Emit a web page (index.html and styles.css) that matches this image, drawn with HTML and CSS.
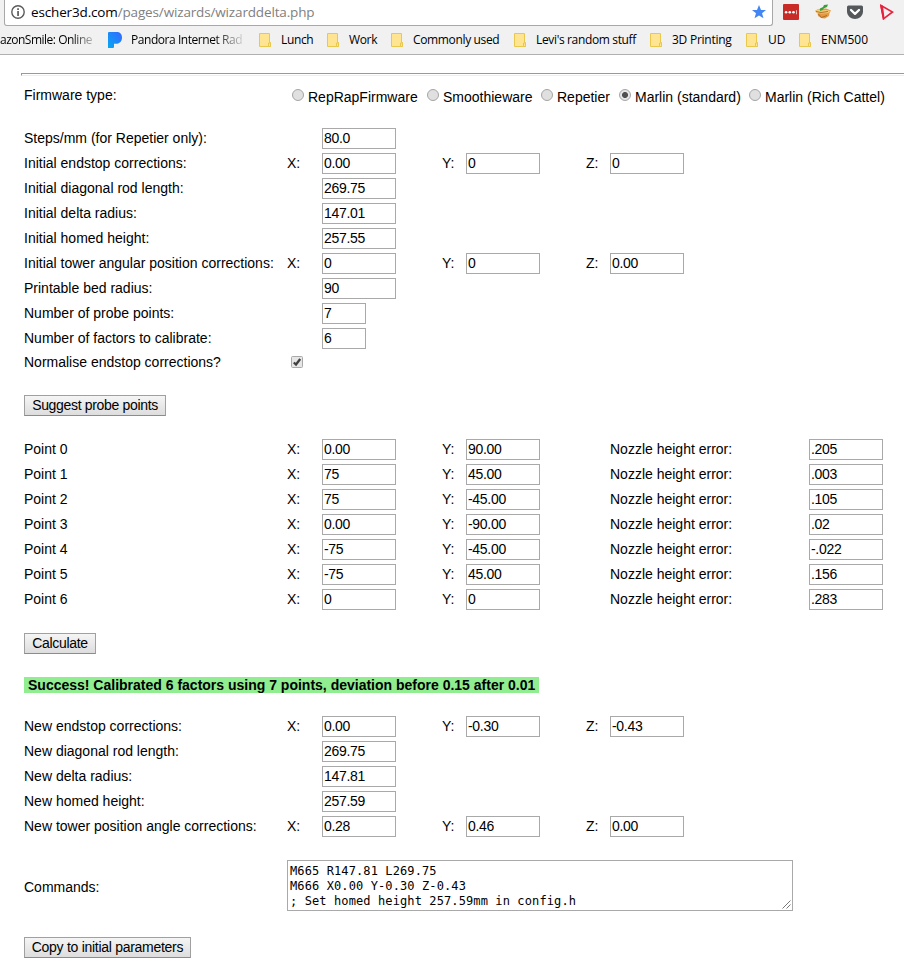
FILE: index.html
```html
<!DOCTYPE html>
<html lang="en">
<head>
<meta charset="utf-8">
<title>Delta calibration wizard</title>
<link rel="stylesheet" href="styles.css">
</head>
<body>
<header class="chrome">
  <div class="toolbar">
    <div class="omnibox">
      <svg class="info" width="14" height="14" viewBox="0 0 14 14"><circle cx="7" cy="7" r="6.2" fill="none" stroke="#5a5a5a" stroke-width="1.4"/><path d="M6.2 3.2h1.700v1.700H6.2zM6.2 6h1.700v5H6.2z" fill="#5a5a5a"/></svg>
      <span class="url">escher3d.com<span class="path">/pages/wizards/wizarddelta.php</span></span>
      <svg class="star" width="16" height="16" viewBox="0 0 16 16"><path d="M8 1l2 5h5l-4 3.300 1.500 5L8 11.500l-4.500 2.800L5 9.300 1 6h5z" fill="#4285f4"/></svg>
    </div>
    <div class="extensions">
      <svg width="16" height="16" viewBox="0 0 16 16"><rect width="16" height="16" rx="1" fill="#c92b27"/><circle cx="3.100" cy="8.200" r="1.300" fill="#fff"/><circle cx="6.800" cy="8.200" r="1.300" fill="#fff"/><circle cx="10.500" cy="8.200" r="1.300" fill="#fff"/><path d="M13 6.200h1v4h-1z" fill="#f3b5b3"/></svg>
      <svg width="16" height="16" viewBox="0 0 16 16"><path d="M0 7l3-2 8-.5 5 2-1.500 2.500-.5 3-4 2.500-4-.5-3-2-.5-3z" fill="#e39a42"/><path d="M0 7.500L3 5l3 1.500 5-.5 4.500 1L13 9l-6 .5L2 9z" fill="#f9cc78"/><path d="M1 7.500l5 1 7-1M3.500 10l3 3.500 5.500-2" fill="none" stroke="#a76520" stroke-width=".9"/><path d="M5 7V4.500L8 3l1-2 4-.5-1 2.500-3 1.200L7.500 6z" fill="#35a23a"/></svg>
      <svg width="16" height="16" viewBox="0 0 16 16"><path d="M1.500 1.500h13Q16 1.500 16 3v4.500C16 12 12 15 8 15S0 12 0 7.500V3q0-1.500 1.500-1.500z" fill="#55585a"/><path d="M4 6l4 3.800L12 6" fill="none" stroke="#fff" stroke-width="2.300" stroke-linecap="round" stroke-linejoin="round"/></svg>
      <svg width="16" height="16" viewBox="0 0 16 16"><path d="M2 1.500L13.500 8 4.500 14.800z" fill="none" stroke="#e8203c" stroke-width="1.600"/><path d="M1 1l3 .8L5.500 14 4 16z" fill="#e8203c"/></svg>
    </div>
  </div>
  <nav class="bookmarks">
    <span class="bm amazon fade">azonSmile: Online</span>
    <svg class="pandora" width="15" height="16" viewBox="0 0 15 16"><defs><linearGradient id="pg" x1="0" y1="1" x2="1" y2="0"><stop offset="0" stop-color="#05a8f3"/><stop offset="1" stop-color="#3668ff"/></linearGradient></defs><path d="M1 0h7.500C12 0 14 2 14 5.500c0 4-2.500 6.300-6.300 6.300H6V15q0 1-1 1H0V1q0-1 1-1z" fill="url(#pg)"/></svg>
    <span class="bm radio-site fade">Pandora Internet Rad</span>
    <svg class="folder" viewBox="0 0 13 15"><path d="M.5.500h10v9h1v4H.500z" fill="#ffe591" stroke="#e8c84d"/><path d="M9.500 13.500v-3.500h2v3.500z" fill="#ffe591" stroke="#e8c84d"/></svg>
    <span class="bm lunch">Lunch</span>
    <svg class="folder" viewBox="0 0 13 15"><path d="M.5.500h10v9h1v4H.500z" fill="#ffe591" stroke="#e8c84d"/><path d="M9.500 13.500v-3.500h2v3.500z" fill="#ffe591" stroke="#e8c84d"/></svg>
    <span class="bm work">Work</span>
    <svg class="folder" viewBox="0 0 13 15"><path d="M.5.500h10v9h1v4H.500z" fill="#ffe591" stroke="#e8c84d"/><path d="M9.500 13.500v-3.500h2v3.500z" fill="#ffe591" stroke="#e8c84d"/></svg>
    <span class="bm common">Commonly used</span>
    <svg class="folder" viewBox="0 0 13 15"><path d="M.5.500h10v9h1v4H.500z" fill="#ffe591" stroke="#e8c84d"/><path d="M9.500 13.500v-3.500h2v3.500z" fill="#ffe591" stroke="#e8c84d"/></svg>
    <span class="bm levi">Levi's random stuff</span>
    <svg class="folder" viewBox="0 0 13 15"><path d="M.5.500h10v9h1v4H.500z" fill="#ffe591" stroke="#e8c84d"/><path d="M9.500 13.500v-3.500h2v3.500z" fill="#ffe591" stroke="#e8c84d"/></svg>
    <span class="bm printing">3D Printing</span>
    <svg class="folder" viewBox="0 0 13 15"><path d="M.5.500h10v9h1v4H.500z" fill="#ffe591" stroke="#e8c84d"/><path d="M9.500 13.500v-3.500h2v3.500z" fill="#ffe591" stroke="#e8c84d"/></svg>
    <span class="bm ud">UD</span>
    <svg class="folder" viewBox="0 0 13 15"><path d="M.5.500h10v9h1v4H.500z" fill="#ffe591" stroke="#e8c84d"/><path d="M9.500 13.500v-3.500h2v3.500z" fill="#ffe591" stroke="#e8c84d"/></svg>
    <span class="bm enm">ENM500</span>
  </nav>
</header>
<main>
  <div class="rule"></div>
  <div class="firmware">
    <span class="caption">Firmware type:</span>
    <label class="f1"><input type="radio" name="fw"><span>RepRapFirmware</span></label>
    <label class="f2"><input type="radio" name="fw"><span>Smoothieware</span></label>
    <label class="f3"><input type="radio" name="fw"><span>Repetier</span></label>
    <label class="f4"><input type="radio" name="fw" checked><span>Marlin (standard)</span></label>
    <label class="f5"><input type="radio" name="fw"><span>Marlin (Rich Cattel)</span></label>
  </div>
  <section class="initial">
    <div class="row"><span>Steps/mm (for Repetier only):</span><span></span><input value="80.0"></div>
    <div class="row"><span>Initial endstop corrections:</span><span>X:</span><input value="0.00"><span>Y:</span><input value="0"><span>Z:</span><input value="0"></div>
    <div class="row"><span>Initial diagonal rod length:</span><span></span><input value="269.75"></div>
    <div class="row"><span>Initial delta radius:</span><span></span><input value="147.01"></div>
    <div class="row"><span>Initial homed height:</span><span></span><input value="257.55"></div>
    <div class="row"><span>Initial tower angular position corrections:</span><span>X:</span><input value="0"><span>Y:</span><input value="0"><span>Z:</span><input value="0.00"></div>
    <div class="row"><span>Printable bed radius:</span><span></span><input value="90"></div>
    <div class="row"><span>Number of probe points:</span><span></span><input class="short" value="7"></div>
    <div class="row"><span>Number of factors to calibrate:</span><span></span><input class="short" value="6"></div>
    <div class="row check"><span>Normalise endstop corrections?</span><span class="box"><svg width="12" height="12" viewBox="0 0 12 12"><rect x=".5" y=".5" width="11" height="11" rx="1" fill="#e6e6e6" stroke="#a9a9a9"/><path d="M2.800 6.500l2.200 2L9.200 3" fill="none" stroke="#404040" stroke-width="2.300"/></svg></span></div>
  </section>
  <button class="suggest">Suggest probe points</button>
  <section class="points">
    <div class="row"><span>Point 0</span><span>X:</span><input value="0.00"><span>Y:</span><input value="90.00"><span></span><span>Nozzle height error:</span><input value=".205"></div>
    <div class="row"><span>Point 1</span><span>X:</span><input value="75"><span>Y:</span><input value="45.00"><span></span><span>Nozzle height error:</span><input value=".003"></div>
    <div class="row"><span>Point 2</span><span>X:</span><input value="75"><span>Y:</span><input value="-45.00"><span></span><span>Nozzle height error:</span><input value=".105"></div>
    <div class="row"><span>Point 3</span><span>X:</span><input value="0.00"><span>Y:</span><input value="-90.00"><span></span><span>Nozzle height error:</span><input value=".02"></div>
    <div class="row"><span>Point 4</span><span>X:</span><input value="-75"><span>Y:</span><input value="-45.00"><span></span><span>Nozzle height error:</span><input value="-.022"></div>
    <div class="row"><span>Point 5</span><span>X:</span><input value="-75"><span>Y:</span><input value="45.00"><span></span><span>Nozzle height error:</span><input value=".156"></div>
    <div class="row"><span>Point 6</span><span>X:</span><input value="0"><span>Y:</span><input value="0"><span></span><span>Nozzle height error:</span><input value=".283"></div>
  </section>
  <button class="calculate">Calculate</button>
  <p class="success">Success! Calibrated 6 factors using 7 points, deviation before 0.15 after 0.01</p>
  <section class="results">
    <div class="row"><span>New endstop corrections:</span><span>X:</span><input value="0.00"><span>Y:</span><input value="-0.30"><span>Z:</span><input value="-0.43"></div>
    <div class="row"><span>New diagonal rod length:</span><span></span><input value="269.75"></div>
    <div class="row"><span>New delta radius:</span><span></span><input value="147.81"></div>
    <div class="row"><span>New homed height:</span><span></span><input value="257.59"></div>
    <div class="row"><span>New tower position angle corrections:</span><span>X:</span><input value="0.28"><span>Y:</span><input value="0.46"><span>Z:</span><input value="0.00"></div>
  </section>
  <div class="commands">
    <span>Commands:</span>
    <div class="output"><pre>M665 R147.81 L269.75
M666 X0.00 Y-0.30 Z-0.43
; Set homed height 257.59mm in config.h</pre><svg width="9" height="9" viewBox="0 0 9 9"><path d="M.5 8.500l8-8M4.500 8.500l4-4" stroke="#555" stroke-width=".8"/></svg></div>
  </div>
  <button class="copy">Copy to initial parameters</button>
</main>
</body>
</html>
```
FILE: styles.css
```css
* { box-sizing: border-box; }
body {
  margin: 0;
  height: 964px;
  overflow: hidden;
  background: #fff;
  color: #000;
  font: 14px/16px "Liberation Sans", Arial, sans-serif;
}
svg { display: block; flex: none; }
.chrome {
  height: 55px;
  background: #f1f1f1;
  border-bottom: 1px solid #b0b0b0;
  font-family: "Open Sans", "Noto Sans", sans-serif;
  white-space: nowrap;
}
.toolbar { display: flex; height: 26px; }
.omnibox {
  display: flex;
  align-items: center;
  width: 769px;
  height: 26px;
  margin-left: 4px;
  padding: 0 5px 1px 6px;
  background: #fff;
  border: 1px solid #a8a8a8;
  border-top: 0;
  border-radius: 0 0 3px 3px;
}
.url { margin-left: 6px; font-size: 13.5px; letter-spacing: -0.15px; }
.path { color: #808080; }
.star { margin-left: auto; }
.extensions { display: flex; gap: 16px; padding: 4px 0 0 10px; }
.bookmarks { display: flex; height: 28px; align-items: center; font-size: 12px; letter-spacing: -0.35px; }
.fade { -webkit-mask-image: linear-gradient(to right, #000 75%, rgba(0, 0, 0, .15)); mask-image: linear-gradient(to right, #000 75%, rgba(0, 0, 0, .15)); }
.bm { flex: none; }
.amazon { width: 95px; margin-right: 13px; letter-spacing: -0.5px; }
.pandora { margin-right: 8px; }
.radio-site { width: 111px; margin-right: 17px; letter-spacing: -0.45px; }
.folder { width: 13px; height: 15px; margin-right: 9px; }
.lunch { width: 46px; }
.work { width: 42px; }
.common { width: 101px; }
.levi { width: 114px; }
.printing { width: 74px; letter-spacing: -0.25px; }
.ud { width: 31px; letter-spacing: 0; }
.enm { letter-spacing: 0; }
main { padding: 18px 0 0 24px; white-space: nowrap; }
.rule { height: 3px; margin-left: -3px; border: 1px solid #999; border-right: 0; border-bottom-color: #eee; }
.firmware { display: flex; height: 50px; padding-top: 11px; }
.caption { width: 268px; }
.firmware label { display: flex; }
.firmware label span { padding-top: 2px; margin-left: 4px; }
.firmware input {
  appearance: none;
  flex: none;
  width: 12px;
  height: 12px;
  margin: 2px 0 0;
  border: 1px solid #a5a5a5;
  border-radius: 50%;
  background: #e0e0e0;
}
.firmware input:checked { background: radial-gradient(circle, #505050 0 2.6px, #e6e6e6 3.4px); }
.f1 { width: 135px; }
.f2 { width: 114px; }
.f3 { width: 78px; }
.f4 { width: 130px; }
.row {
  display: grid;
  grid-template-columns: 263px 35px 120px 24px 120px 24px 199px 74px;
  align-items: center;
  height: 25px;
}
.row > span { padding-bottom: 2px; }
.row input {
  width: 74px;
  height: 21px;
  padding: 0 1px 2px;
  border: 1px solid #a9a9a9;
  font: 14px "Liberation Sans", Arial, sans-serif;
  letter-spacing: -0.3px;
}
.row .short { width: 44px; }
.row.check { height: 23px; }
.row .box { padding-left: 4px; }
button {
  display: block;
  height: 21px;
  padding: 0 0 1px;
  border: 1px solid #a0a0a0;
  border-bottom-color: #8c8c8c;
  background: linear-gradient(#f5f5f5, #ddd);
  color: #000;
  font: 14px/18px "Liberation Sans", Arial, sans-serif;
  letter-spacing: -0.33px;
}
.suggest { width: 142px; margin: 21px 0; }
.calculate { width: 72px; margin: 21px 0 23px; }
.success { width: 515px; height: 16px; margin: 0 0 21px; padding-left: 4px; background: #90ee90; font-weight: bold; }
.commands { display: flex; align-items: center; height: 51px; margin: 21px 0 26px; }
.commands > span { width: 263px; padding-top: 3px; }
.output { position: relative; width: 506px; height: 51px; padding: 3px 2px 2px; border: 1px solid #a9a9a9; }
.output pre { margin: 0; font: 12px/15px "DejaVu Sans Mono", monospace; letter-spacing: 0.11px; }
.output svg { position: absolute; right: 1px; bottom: 1px; }
.copy { width: 167px; letter-spacing: -0.28px; }
```
